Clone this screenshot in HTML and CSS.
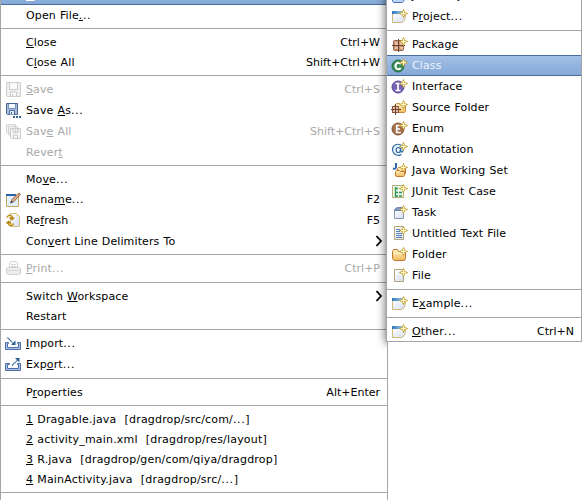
FILE: index.html
```html
<!DOCTYPE html>
<html lang="en">
<head>
<meta charset="utf-8">
<title>File menu</title>
<link rel="stylesheet" href="styles.css">
</head>
<body>
<svg width="0" height="0" class="defs">
  <defs>
    <linearGradient id="gold" x1="0" y1="0" x2="0" y2="1"><stop offset="0" stop-color="#fff3c4"/><stop offset="1" stop-color="#f0b95c"/></linearGradient>
    <linearGradient id="paper" x1="0" y1="0" x2="1" y2="1"><stop offset="0" stop-color="#ffffff"/><stop offset="1" stop-color="#d3def2"/></linearGradient>
    <linearGradient id="bar" x1="0" y1="0" x2="1" y2="0"><stop offset="0" stop-color="#2d74b8"/><stop offset="1" stop-color="#a5cdf0"/></linearGradient>
    <symbol id="star" viewBox="0 0 16 16">
      <path d="M11.500 1.500L12.500 4.500L15.500 5.500L12.500 6.500L11.500 9.500L10.500 6.500L7.500 5.500L10.500 4.500Z" fill="#fffbd2" stroke="#c39d2e"/>
      <path d="M11.500 3v5M9 5.500h5" stroke="#fff9c4"/>
    </symbol>
    <symbol id="project" viewBox="0 0 16 16">
      <path d="M.5 5v9.500h9q4-1 4-8V5z" fill="url(#paper)" stroke="#cdb878"/>
      <path d="M0 3h11v3H0z" fill="url(#bar)"/>
      <use href="#star"/>
    </symbol>
    <symbol id="package" viewBox="0 0 16 16">
      <rect x="1.500" y="4.500" width="10" height="10" rx="1" fill="#c99476" stroke="#9a6650"/>
      <path d="M3 6h3v3H3zM8 6h3v3H8zM3 11h3v2H3zM8 11h3v2H8z" fill="#e8bfa2"/>
      <path d="M6.500 3v13M0 9.500h13" stroke="#6b4234"/>
      <use href="#star"/>
    </symbol>
    <symbol id="class" viewBox="0 0 16 16">
      <circle cx="6" cy="9" r="6" fill="#398a55" stroke="#1f7040"/>
      <path d="M8.800 7Q6.500 4.700 4.200 6.800Q2.600 9 4.200 11.300Q6.500 13.300 8.800 11" fill="none" stroke="#fff" stroke-width="2"/>
      <use href="#star"/>
    </symbol>
    <symbol id="interface" viewBox="0 0 16 16">
      <circle cx="6" cy="9" r="6" fill="#7764b5" stroke="#574397"/>
      <path d="M3.500 5.500h5M3.500 12.500h5M6 6v6" stroke="#fff" stroke-width="1.700"/>
      <use href="#star"/>
    </symbol>
    <symbol id="enum" viewBox="0 0 16 16">
      <circle cx="6" cy="9" r="6" fill="#a76f4b" stroke="#84502f"/>
      <path d="M8.800 5.500H4.700v7h4.100M4.500 9h3.500" fill="none" stroke="#fff" stroke-width="1.700"/>
      <use href="#star"/>
    </symbol>
    <symbol id="annotation" viewBox="0 0 16 16">
      <circle cx="6" cy="9" r="5.500" fill="#edf4fc"/>
      <path d="M9.500 13.500Q6 15.300 2.500 13Q-1 9 1.500 5.300Q4.500 2 8.800 4Q12 6 11.200 9.500Q10.500 11.600 8.700 10.700L8.800 6.500" fill="none" stroke="#2d6ba5" stroke-width="1.200"/>
      <ellipse cx="6.300" cy="9" rx="2.200" ry="2.500" fill="none" stroke="#2d6ba5" stroke-width="1.200"/>
      <use href="#star"/>
    </symbol>
    <symbol id="folder" viewBox="0 0 16 16">
      <path d="M.5 12.500V5.500l1-2h4l1 2h6l1 1v6l-1 2H2z" fill="url(#gold)" stroke="#c17a30"/>
      <path d="M1.500 7.500h11" stroke="#fff3cd"/>
      <use href="#star"/>
    </symbol>
    <symbol id="source" viewBox="0 0 16 16">
      <path d="M2.500 12.500v-6l2-2h3l1 1h4l1 1v6l-1 1H3z" fill="url(#gold)" stroke="#c88d3c"/>
      <rect x=".5" y="7.500" width="6" height="6" fill="#e5bda3" stroke="#875443"/>
      <path d="M3.500 5v11M-1 10.500h10" stroke="#68422f"/>
      <use href="#star"/>
    </symbol>
    <symbol id="working" viewBox="0 0 16 16">
      <path d="M4 1v4.500q-.8 2-3 .8" fill="none" stroke="#326ba8" stroke-width="2"/>
      <path d="M5.500 10V6.500l1-1h3l1 1h3v5h-2" fill="url(#gold)" stroke="#c17a30"/>
      <path d="M3.500 14V9.500l1-1h3l1 1h4v4l-1 1h-7z" fill="url(#gold)" stroke="#c17a30"/>
      <use href="#star"/>
    </symbol>
    <symbol id="junit" viewBox="0 0 16 16">
      <path d="M.5 2.500h11v12H.5z" fill="#eef5e6" stroke="#b5ad76"/>
      <path d="M3.500 4v10M3 5.500h3M3 9.500h3M3 13h3M7 9.500h3M7 13h3" stroke="#289458" stroke-width="1.300"/>
      <use href="#star"/>
    </symbol>
    <symbol id="task" viewBox="0 0 16 16">
      <path d="M2.500 5.500h9v9h-9z" fill="url(#paper)" stroke="#8a97ad"/>
      <path d="M2.500 6.500q1-3 3-3h5l1 3z" fill="#809ac4" stroke="#7186ac"/>
      <use href="#star"/>
    </symbol>
    <symbol id="text" viewBox="0 0 16 16">
      <path d="M2.500 1.500h9v13h-9z" fill="url(#paper)" stroke="#b4a675"/>
      <path d="M4 4.500h4M4 6.500h4M4 8.500h6M4 10.500h6M4 12.500h6" stroke="#5a7fb8"/>
      <use href="#star"/>
    </symbol>
    <symbol id="file" viewBox="0 0 16 16">
      <path d="M2.500 2.500h9v12h-9z" fill="url(#paper)" stroke="#b4a675"/>
      <use href="#star"/>
    </symbol>
    <symbol id="javaproject" viewBox="0 0 16 16">
      <path d="M.5 7.500h12l1 1-2 6-1 1h-9l-1-1z" fill="#bdd2f5" stroke="#4b73b4"/>
    </symbol>
    <symbol id="save" viewBox="0 0 16 16">
      <path d="M.5 1.500h14v14h-13l-1-1z" fill="#f0f0f0" stroke="#cfcfcf"/>
      <path d="M3.500 2v6.500h8V2M4.500 15v-4h6v4M6.500 13v2" fill="#fafafa" stroke="#cbcbcb"/>
    </symbol>
    <symbol id="saveas" viewBox="0 0 16 16">
      <path d="M.5 1.500h11v11h-10l-1-1z" fill="#a8bddb" stroke="#456795"/>
      <path d="M2.500 2v4.500h7V2" fill="#f4f8ff" stroke="#7590b6"/>
      <path d="M3.500 12.500v-4h5v4M5.500 10v2" fill="#e5edf8" stroke="#496b99"/>
      <path d="M7 14h2v2H7zM10 14h2v2h-2zM13 14h2v2h-2z" fill="#3265a3"/>
    </symbol>
    <symbol id="saveall" viewBox="0 0 16 16">
      <path d="M.5 1.500h9v9h-8l-1-1zM2.500 3.500h9v9h-8l-1-1z" fill="#f3f3f3" stroke="#d2d2d2"/>
      <path d="M4.500 5.500h10v10h-9l-1-1zM7 6v3.500h5V6M7.500 15v-3h4v3" fill="#f6f6f6" stroke="#cbcbcb"/>
    </symbol>
    <symbol id="rename" viewBox="0 0 16 16">
      <path d="M.5 4.500h12v11H.5z" fill="#e2effc" stroke="#c2a85d"/>
      <path d="M0 3h10v2H0z" fill="#2965a2"/>
      <path d="M5 11.500L6 8.500l6-6q2-1 2.500 1l-6.500 7z" fill="#d9a880" stroke="#845944" stroke-width=".8"/>
      <path d="M4 12.500l1.200-2.800 1.800 1.600z" fill="#233b55"/>
    </symbol>
    <symbol id="refresh" viewBox="0 0 16 16">
      <path d="M4.500 1.500h6l3 3v10h-9z" fill="url(#paper)" stroke="#d1bc78"/>
      <path d="M10.500 1.500v3h3z" fill="#ecd796"/>
      <path d="M1 5.500Q3.500 1.500 6 4.500V7M8 5.500L6 7.500 3.500 5.500M7.500 11.500Q5 15.500 2.500 12V9.500M.5 11.500l2-2 2.500 2" fill="none" stroke="#b5830f" stroke-width="1.500"/>
      <path d="M1.500 5.200Q3.700 2.700 5.500 5M7 11.500Q5 14 3 12" fill="none" stroke="#f2d56b" stroke-width=".8"/>
    </symbol>
    <symbol id="print" viewBox="0 0 16 16">
      <path d="M3.500 9V3l2-1.500h5l1 1v7" fill="#fafafa" stroke="#d2d2d2"/>
      <path d="M.5 8.500l2-1h10l2 1v5l-2 1h-10l-2-1z" fill="#ededed" stroke="#cfcfcf"/>
      <path d="M5 4.500h5M5 6.500h5M2 10.500h11" stroke="#d6d6d6"/>
    </symbol>
    <symbol id="import" viewBox="0 0 16 16">
      <path d="M-.5 7.500h3v1h-1v4h11v-4h-1v-1h3v7h-15z" fill="#a9c0e2" stroke="#4e6fa7"/>
      <path d="M1.500 2.500l7 7" fill="none" stroke="#286098" stroke-width="1.200" stroke-dasharray="1.400 .4"/>
      <path d="M9.500 5.500v4.500h-4.500z" fill="#286098"/>
    </symbol>
    <symbol id="export" viewBox="0 0 16 16">
      <path d="M-.5 7.500h4v1h-2v4h11v-4h-1v-1h3v7h-15z" fill="#a9c0e2" stroke="#4e6fa7"/>
      <path d="M6 9.500L12 3.500" fill="none" stroke="#286098" stroke-width="1.200" stroke-dasharray="1.400 .4"/>
      <path d="M9 2h4.500v4.500z" fill="#286098"/>
    </symbol>
  </defs>
</svg>
<div class="screen">
  <div class="menu file-menu">
    <div class="item tall selected"><span class="icon"></span><span class="label"><u>N</u>ew</span></div>
    <div class="item"><span class="icon"></span><span class="label">Open File<span class="dots"><u>.</u>..</span></span></div>
    <hr>
    <div class="item"><span class="icon"></span><span class="label"><u>C</u>lose</span><span class="key">Ctrl+W</span></div>
    <div class="item"><span class="icon"></span><span class="label">C<u>l</u>ose All</span><span class="key">Shift+Ctrl+W</span></div>
    <hr>
    <div class="item tall disabled"><svg class="icon"><use href="#save"/></svg><span class="label"><u>S</u>ave</span><span class="key">Ctrl+S</span></div>
    <div class="item tall"><svg class="icon"><use href="#saveas"/></svg><span class="label">Save <u>A</u>s<span class="dots">...</span></span></div>
    <div class="item tall disabled"><svg class="icon"><use href="#saveall"/></svg><span class="label">Sav<u>e</u> All</span><span class="key">Shift+Ctrl+S</span></div>
    <div class="item disabled"><span class="icon"></span><span class="label">Rever<u>t</u></span></div>
    <hr>
    <div class="item"><span class="icon"></span><span class="label">Mo<u>v</u>e<span class="dots">...</span></span></div>
    <div class="item tall"><svg class="icon"><use href="#rename"/></svg><span class="label">Rena<u>m</u>e<span class="dots">...</span></span><span class="key">F2</span></div>
    <div class="item tall"><svg class="icon"><use href="#refresh"/></svg><span class="label">Re<u>f</u>resh</span><span class="key">F5</span></div>
    <div class="item"><span class="icon"></span><span class="label">Con<u>v</u>ert Line Delimiters To</span><svg class="arrow" viewBox="0 0 8 12"><path d="M1.500 1L6 6L1.500 11"/></svg></div>
    <hr>
    <div class="item tall disabled"><svg class="icon"><use href="#print"/></svg><span class="label"><u>P</u>rint<span class="dots">...</span></span><span class="key">Ctrl+P</span></div>
    <hr>
    <div class="item"><span class="icon"></span><span class="label">Switch <u>W</u>orkspace</span><svg class="arrow" viewBox="0 0 8 12"><path d="M1.500 1L6 6L1.500 11"/></svg></div>
    <div class="item"><span class="icon"></span><span class="label">Restart</span></div>
    <hr>
    <div class="item tall"><svg class="icon"><use href="#import"/></svg><span class="label"><u>I</u>mport<span class="dots">...</span></span></div>
    <div class="item tall"><svg class="icon"><use href="#export"/></svg><span class="label">Exp<u>o</u>rt<span class="dots">...</span></span></div>
    <hr>
    <div class="item"><span class="icon"></span><span class="label">P<u>r</u>operties</span><span class="key">Alt+Enter</span></div>
    <hr>
    <div class="item recent"><span class="icon"></span><span class="label"><u>1</u> Dragable.java  [dragdrop/src/com/<span class="dots">...</span>]</span></div>
    <div class="item recent"><span class="icon"></span><span class="label"><u>2</u> activity_main.xml  [dragdrop/res/layout]</span></div>
    <div class="item recent"><span class="icon"></span><span class="label"><u>3</u> R.java  [dragdrop/gen/com/qiya/dragdrop]</span></div>
    <div class="item recent"><span class="icon"></span><span class="label"><u>4</u> MainActivity.java  [dragdrop/src/<span class="dots">...</span>]</span></div>
    <hr>
    <div class="item"></div>
    <div class="shade"></div>
  </div>
  <div class="menu new-menu">
    <div class="item tall"><svg class="icon"><use href="#javaproject"/></svg><span class="label">Java Project</span></div>
    <div class="item tall"><svg class="icon"><use href="#project"/></svg><span class="label">P<u>r</u>oject<span class="dots">...</span></span></div>
    <hr>
    <div class="item tall"><svg class="icon"><use href="#package"/></svg><span class="label">Package</span></div>
    <div class="item tall selected"><svg class="icon"><use href="#class"/></svg><span class="label">Class</span></div>
    <div class="item tall"><svg class="icon"><use href="#interface"/></svg><span class="label">Interface</span></div>
    <div class="item tall"><svg class="icon"><use href="#source"/></svg><span class="label">Source Folder</span></div>
    <div class="item tall"><svg class="icon"><use href="#enum"/></svg><span class="label">Enum</span></div>
    <div class="item tall"><svg class="icon"><use href="#annotation"/></svg><span class="label">Annotation</span></div>
    <div class="item tall"><svg class="icon"><use href="#working"/></svg><span class="label">Java Working Set</span></div>
    <div class="item tall"><svg class="icon"><use href="#junit"/></svg><span class="label">JUnit Test Case</span></div>
    <div class="item tall"><svg class="icon"><use href="#task"/></svg><span class="label">Task</span></div>
    <div class="item tall"><svg class="icon"><use href="#text"/></svg><span class="label">Untitled Text File</span></div>
    <div class="item tall"><svg class="icon"><use href="#folder"/></svg><span class="label">Folder</span></div>
    <div class="item tall"><svg class="icon"><use href="#file"/></svg><span class="label">File</span></div>
    <hr>
    <div class="item tall"><svg class="icon"><use href="#project"/></svg><span class="label">E<u>x</u>ample<span class="dots">...</span></span></div>
    <hr>
    <div class="item tall"><svg class="icon"><use href="#project"/></svg><span class="label"><u>O</u>ther<span class="dots">...</span></span><span class="key">Ctrl+N</span></div>
  </div>
</div>
</body>
</html>
```
FILE: styles.css
```css
* { box-sizing: border-box; }

body {
  margin: 0;
  background: #fff;
  font: 11px/20px "DejaVu Sans", sans-serif;
  color: #000;
}

.defs { position: absolute; }

symbol { overflow: visible; }

.screen {
  position: relative;
  width: 582px;
  height: 500px;
  overflow: hidden;
}

.menu {
  display: flex;
  flex-direction: column;
  background: #fff;
  border: 1px solid #a5a5a5;
}

.file-menu {
  position: relative;
  width: 388px;
  height: 500px;
  padding-right: 6px;
  border-width: 0 1px;
  overflow: hidden;
}

/* The submenu opens over the right edge of the file menu. */
.new-menu {
  position: absolute;
  left: 386px;
  top: 0;
  width: 196px;
  height: 342px;
  border-top: 0;
  overflow: hidden;
}

.item {
  display: flex;
  align-items: center;
  flex: none;
  height: 20px;
  padding: 0 1px 0 5px;
  white-space: pre;
}

.tall { height: 21px; }

.file-menu > .item:first-child { margin: -16px -6px 0 -1px; padding-left: 6px; }
.new-menu > .item:first-child { margin-top: -15px; }

.icon {
  flex: none;
  align-self: flex-start;
  width: 16px;
  height: 16px;
  margin: 2px 4px 0 0;
  overflow: visible;
}

.label {
  flex: 1;
  margin-top: 2px;
  letter-spacing: .12px;
  word-spacing: .4px;
}

.recent .label { letter-spacing: .18px; }

.label .dots { letter-spacing: .6px; }

.key { margin-top: 2px; text-align: right; }

.tall > .label, .tall > .key { margin-top: 0; }
.file-menu > .item:first-child > .label { margin-top: 2px; }

u {
  text-decoration: underline;
  text-decoration-thickness: 1px;
  text-underline-offset: 1px;
  text-decoration-skip-ink: none;
}

hr {
  flex: none;
  height: 1px;
  margin: 3px 0;
  border: 0;
  background: #a5a5a5;
}

.file-menu > hr { margin-right: -6px; }

.disabled { color: #a8a8a8; }

.selected {
  color: #fff;
  background: linear-gradient(#a5c2e8, #83a7d6);
  box-shadow: inset 0 0 0 1px #4b6d9b;
}

.new-menu > .selected { margin: 0 -1px; padding-left: 6px; color: #edf3fa; }

.new-menu .key { margin-right: 6px; }

.arrow {
  width: 8px;
  height: 12px;
  margin-right: -3px;
  fill: none;
  stroke: #000;
  stroke-width: 1.8;
}

/* Shadow the submenu casts on this menu only. */
.shade {
  position: absolute;
  left: 385px;
  top: -20px;
  width: 20px;
  height: 362px;
  box-shadow: 0 0 8px 1px rgba(0, 0, 0, .55);
}
```
